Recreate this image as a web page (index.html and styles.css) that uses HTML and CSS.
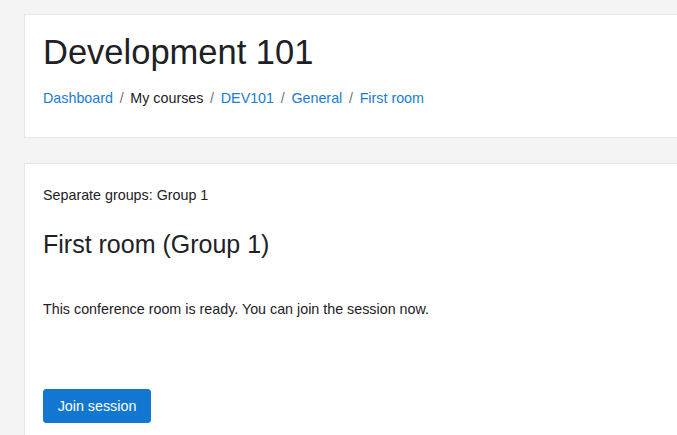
FILE: index.html
```html
<!DOCTYPE html>
<html>
<head>
<meta charset="utf-8">
<link rel="stylesheet" href="styles.css">
</head>
<body>
<div class="page">
  <header class="card header-card">
    <h1 class="title">Development 101</h1>
    <nav class="breadcrumb">
      <a href="#">Dashboard</a><span class="sep">/</span>
      <span class="plain">My courses</span><span class="sep">/</span>
      <a href="#">DEV101</a><span class="sep">/</span>
      <a href="#">General</a><span class="sep">/</span>
      <a href="#">First room</a>
    </nav>
  </header>
  <main class="card main-card">
    <div class="groups">Separate groups: Group 1</div>
    <h2 class="room">First room (Group 1)</h2>
    <p class="status">This conference room is ready. You can join the session now.</p>
    <button class="btn">Join session</button>
  </main>
</div>
</body>
</html>
```
FILE: styles.css
```css
html, body {
  margin: 0;
  padding: 0;
  background: #f4f4f4;
  font-family: "Liberation Sans", Arial, sans-serif;
  color: #1d2125;
}
.page {
  padding: 14px 0 0 24px;
  display: flex;
  flex-direction: column;
  gap: 25px;
}
.card {
  background: #fff;
  border: 1px solid #e6e6e6;
  border-right: none;
  padding: 0 0 0 18px;
}
.header-card {
  height: 122px;
}
.title {
  margin: 0;
  padding-top: 17px;
  font-size: 34.5px;
  font-weight: 400;
  line-height: 40px;
}
.breadcrumb {
  margin-top: 16px;
  font-size: 14.3px;
  line-height: 20px;
  display: flex;
  align-items: center;
}
.breadcrumb a {
  color: #1a7bd3;
  text-decoration: none;
}
.breadcrumb .sep {
  color: #6a737b;
  padding: 0 6.7px;
}
.main-card {
  height: 300px;
}
.groups {
  margin-top: 21px;
  font-size: 14.3px;
  line-height: 20px;
}
.room {
  margin: 24px 0 0;
  font-size: 25px;
  font-weight: 400;
  line-height: 30px;
}
.status {
  margin: 40px 0 0;
  font-size: 14.3px;
  line-height: 20px;
}
.btn {
  margin-top: 70px;
  display: block;
  width: 108px;
  height: 34px;
  background: #1177d1;
  color: #fff;
  border: 1px solid #1177d1;
  border-radius: 3px;
  font-family: "Liberation Sans", Arial, sans-serif;
  font-size: 14.3px;
  padding: 0;
}
```
